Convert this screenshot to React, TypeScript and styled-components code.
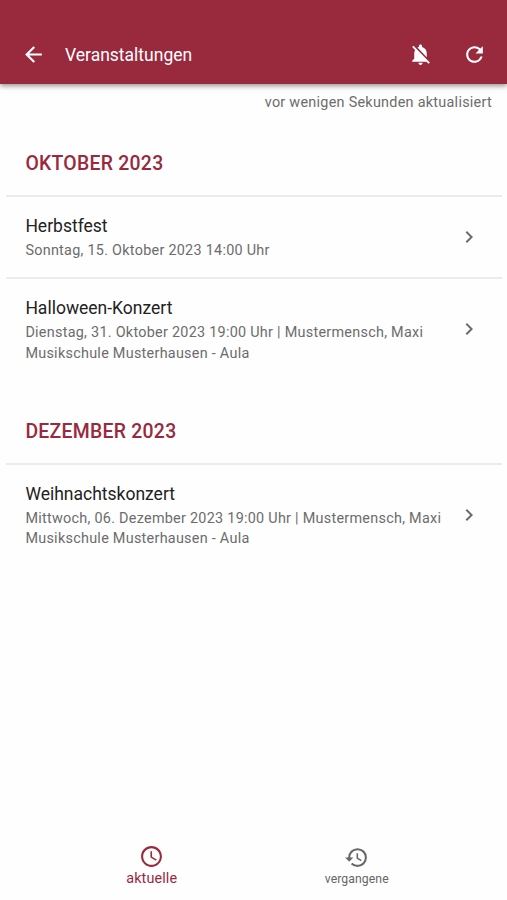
import React from "react";
import styled, { createGlobalStyle } from "styled-components";
import {
  MdArrowBack,
  MdNotificationsOff,
  MdRefresh,
  MdChevronRight,
  MdAccessTime,
  MdHistory,
} from "react-icons/md";

const accent = "#99293d";

const Global = createGlobalStyle`
  * { box-sizing: border-box; }
  body { margin: 0; background: #fff; font-family: Roboto, "Liberation Sans", sans-serif; }
  h1, h2, h3, p { margin: 0; padding: 0; font-weight: 400; }
`;

const Screen = styled.div`
  width: 507px;
  height: 900px;
  display: flex;
  flex-direction: column;
  background: #fefefe;
  overflow: hidden;
`;

const AppBar = styled.header`
  height: 84px;
  flex: none;
  padding: 25px 20px 0 20.5px;
  display: flex;
  align-items: center;
  background: ${accent};
  color: #fff;
  box-shadow: 0 2px 5px rgba(0, 0, 0, 0.42);
`;

const Title = styled.h1`
  flex: 1;
  margin-left: 19.5px;
  font-size: 17.5px;
  line-height: 24px;
`;

const IconButton = styled.button`
  display: flex;
  padding: 0;
  border: 0;
  background: none;
  color: inherit;
  & + & { margin-left: 29px; }
`;

const Updated = styled.p`
  padding: 9px 15px 0 0;
  text-align: right;
  font-size: 14.4px;
  line-height: 20px;
  letter-spacing: 0.27px;
  color: #6c6c6c;
`;

const Month = styled.section`
  margin: 39px 5px 0 6px;
  & + & { margin-top: 40px; }
`;

const MonthTitle = styled.h2`
  padding-left: 19.4px;
  height: 43px;
  font-size: 19.4px;
  line-height: 24px;
  font-weight: 500;
  letter-spacing: 0.27px;
  color: ${accent};
`;

const EventRow = styled.div`
  display: flex;
  align-items: center;
  padding: 16px 21px 15.4px 19.4px;
  border-top: 2px solid #ebebeb;
  color: #6c6c6c;
`;

const EventText = styled.div`
  flex: 1;
`;

const EventTitle = styled.h3`
  margin-bottom: 2px;
  font-size: 17.5px;
  line-height: 26px;
  color: #222;
`;

const Detail = styled.p`
  font-size: 14.4px;
  line-height: 20.6px;
  letter-spacing: 0.27px;
  color: #6c6c6c;
  white-space: nowrap;
`;

const Chevron = styled(MdChevronRight)`
  flex: none;
  margin-bottom: 1px;
`;

const TabBar = styled.nav`
  margin-top: auto;
  height: 64px;
  padding: 0 48px;
  display: grid;
  grid-template-columns: 1fr 1fr;
`;

const Tab = styled.button<{ $active?: boolean }>`
  display: flex;
  flex-direction: column;
  align-items: center;
  padding: ${(p) => (p.$active ? "8px 0 0 2px" : "9px 0 0 1px")};
  border: 0;
  background: none;
  font-family: inherit;
  font-size: ${(p) => (p.$active ? 14.4 : 12.2)}px;
  line-height: ${(p) => (p.$active ? 20 : 18)}px;
  letter-spacing: ${(p) => (p.$active ? 0.12 : 0.1)}px;
  color: ${(p) => (p.$active ? accent : "#666")};
`;

const months = [
  {
    name: "OKTOBER 2023",
    events: [
      { title: "Herbstfest", lines: ["Sonntag, 15. Oktober 2023 14:00 Uhr"] },
      {
        title: "Halloween-Konzert",
        lines: [
          "Dienstag, 31. Oktober 2023 19:00 Uhr | Mustermensch, Maxi",
          "Musikschule Musterhausen - Aula",
        ],
      },
    ],
  },
  {
    name: "DEZEMBER 2023",
    events: [
      {
        title: "Weihnachtskonzert",
        lines: [
          "Mittwoch, 06. Dezember 2023 19:00 Uhr | Mustermensch, Maxi",
          "Musikschule Musterhausen - Aula",
        ],
      },
    ],
  },
];

export default function App() {
  return (
    <Screen>
      <Global />
      <AppBar>
        <IconButton aria-label="Zurück"><MdArrowBack size={25} /></IconButton>
        <Title>Veranstaltungen</Title>
        <IconButton aria-label="Benachrichtigungen aus"><MdNotificationsOff size={25} /></IconButton>
        <IconButton aria-label="Aktualisieren"><MdRefresh size={25} /></IconButton>
      </AppBar>
      <Updated>vor wenigen Sekunden aktualisiert</Updated>
      {months.map((m) => (
        <Month key={m.name}>
          <MonthTitle>{m.name}</MonthTitle>
          {m.events.map((e) => (
            <EventRow key={e.title}>
              <EventText>
                <EventTitle>{e.title}</EventTitle>
                {e.lines.map((l) => <Detail key={l}>{l}</Detail>)}
              </EventText>
              <Chevron size={24} />
            </EventRow>
          ))}
        </Month>
      ))}
      <TabBar>
        <Tab $active><MdAccessTime size={25} />aktuelle</Tab>
        <Tab><MdHistory size={25} />vergangene</Tab>
      </TabBar>
    </Screen>
  );
}
